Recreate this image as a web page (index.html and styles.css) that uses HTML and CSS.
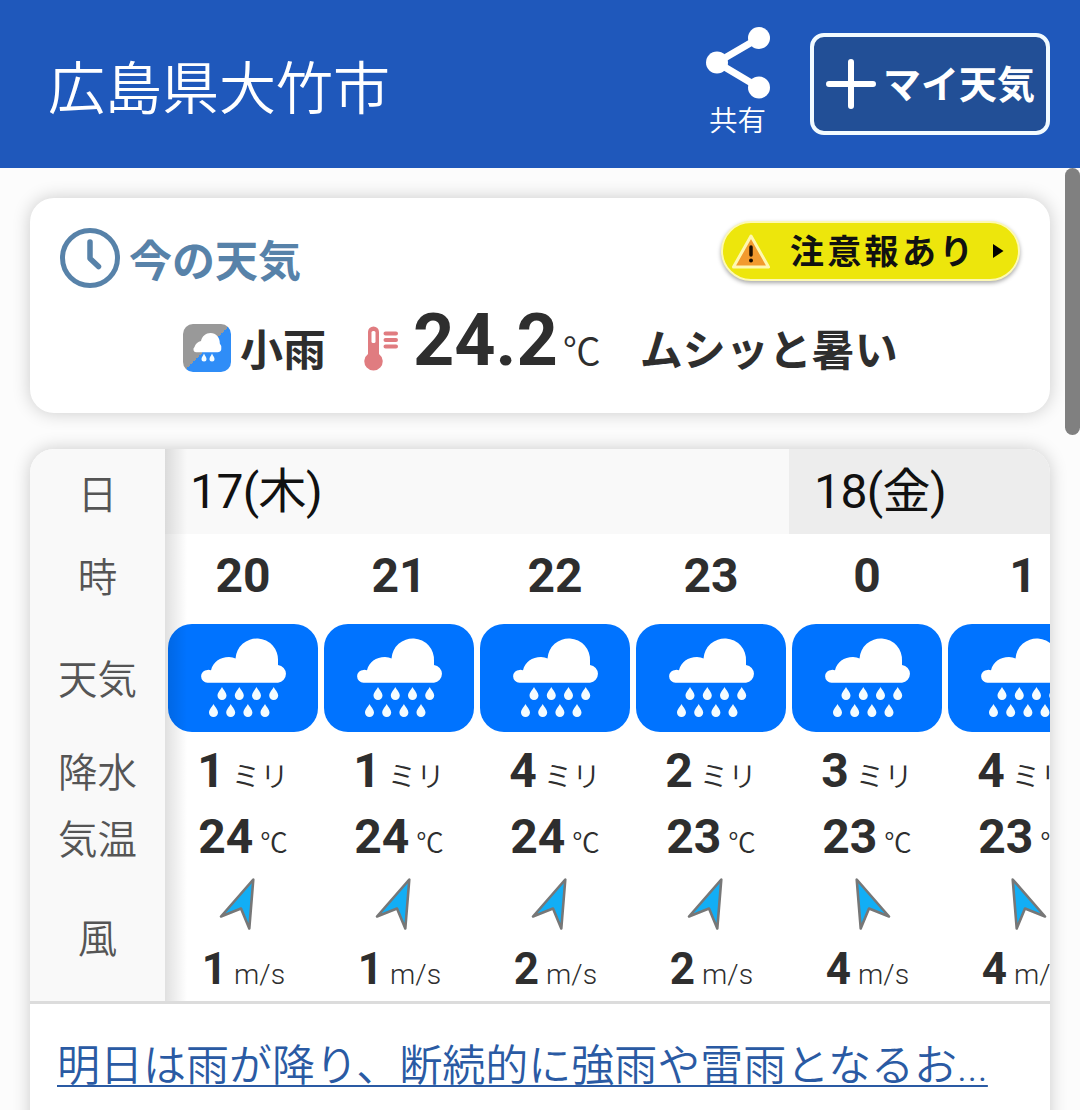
FILE: index.html
```html
<!DOCTYPE html>
<html lang="ja">
<head>
    <meta charset="UTF-8">
    <meta name="viewport" content="width=device-width, initial-scale=1.0">
    <title>広島県大竹市の天気</title>
    <link rel="stylesheet" href="styles.css">
</head>
<body>
    <!-- shared icons -->
    <svg class="defs" width="0" height="0">
        <symbol id="rain" viewBox="0 0 150 108">
            <path fill="#fff" d="M39.500 58.700A6.400 6.400 0 0 1 39.500 45.900Q41.500 45.700 43 46.300C45 38 52 33.200 61 33Q65 33 67.500 34.500A21.200 21.200 0 0 1 110 37V41A8.900 8.900 0 0 1 110 58.700Z"/>
            <g fill="#f4fcff">
                <path id="drop" d="M54 63C55.200 65.500 58.500 68.500 58.500 71.600A4.500 4.500 0 0 1 49.500 71.600C49.500 68.500 52.800 65.500 54 63Z"/>
                <use href="#drop" x="17.300"/>
                <use href="#drop" x="34.500"/>
                <use href="#drop" x="51.700"/>
                <use href="#drop" x="-8.500" y="17"/>
                <use href="#drop" x="8.700" y="17"/>
                <use href="#drop" x="25.900" y="17"/>
                <use href="#drop" x="43" y="17"/>
            </g>
        </symbol>
        <symbol id="wind" viewBox="0 0 54 56">
            <path fill="#12aef5" stroke="#777" stroke-width="2.600" stroke-linejoin="round" d="M37.300 4.500L5 41.500L25 33.500L33.300 53.500Z"/>
        </symbol>
    </svg>

    <header class="header">
        <h1 class="city">広島県大竹市</h1>
        <div class="share">
            <svg width="66" height="72" viewBox="0 0 66 72">
                <path d="M53 11L11 35.500L53 60.500" fill="none" stroke="#fff" stroke-width="7"/>
                <circle cx="53" cy="11" r="11" fill="#fff"/>
                <circle cx="11" cy="35.500" r="11" fill="#fff"/>
                <circle cx="53" cy="60.500" r="11" fill="#fff"/>
            </svg>
            <span>共有</span>
        </div>
        <button class="my-weather">
            <svg width="50" height="52" viewBox="0 0 50 52">
                <path d="M25 4V48M3 26H47" stroke="#fff" stroke-width="6" stroke-linecap="round"/>
            </svg>
            <span>マイ天気</span>
        </button>
    </header>

    <main class="main">
        <section class="card now">
            <div class="now-head">
                <svg width="60" height="60" viewBox="0 0 60 60" fill="none" stroke="#5782a9">
                    <circle cx="30" cy="30" r="27.500" stroke-width="5"/>
                    <path d="M30 14V30.500L38.500 38.500" stroke-width="5.500" stroke-linecap="round" stroke-linejoin="round"/>
                </svg>
                <h2>今の天気</h2>
                <div class="alert">
                    <svg width="40" height="37" viewBox="0 0 40 37">
                        <path d="M20 3L37.500 34H2.500Z" fill="#f29a2e" stroke="#fff7b0" stroke-width="3" stroke-linejoin="round"/>
                        <path d="M20 14V22" stroke="#1a0d00" stroke-width="3.500" stroke-linecap="round"/>
                        <circle cx="20" cy="27.500" r="2" fill="#1a0d00"/>
                    </svg>
                    <span class="alert-text">注意報あり</span>
                    <svg width="11" height="16" viewBox="0 0 11 16"><path d="M0 1L10.500 8L0 15Z" fill="#000"/></svg>
                </div>
            </div>
            <div class="now-body">
                <svg class="now-icon" width="48" height="48" viewBox="0 0 48 48">
                    <defs>
                        <linearGradient id="half" x1="0" y1="0" x2="1" y2="1">
                            <stop offset="0.500" stop-color="#999"/>
                            <stop offset="0.500" stop-color="#2f8df7"/>
                        </linearGradient>
                    </defs>
                    <rect width="48" height="48" rx="10" fill="url(#half)"/>
                    <path fill="#fff" d="M13 28.300A3 3 0 0 1 11.500 23C12.500 20 15 17.500 18 17C19 12 23 9 27.500 9C33 9 37 13.500 36.800 19.500Q38.500 21.500 38.300 24A4 4 0 0 1 35 28.300Z"/>
                    <path fill="#f4fcff" d="M21 29.500C22 32 23.500 33 23.500 35A2.500 2.500 0 0 1 18.500 35C18.500 33 20 32 21 29.500ZM29 29.500C30 32 31.500 33 31.500 35A2.500 2.500 0 0 1 26.500 35C26.500 33 28 32 29 29.500Z"/>
                </svg>
                <span class="sky">小雨</span>
                <svg class="thermo" width="34" height="46" viewBox="0 0 34 46">
                    <path fill="#e07c80" d="M4 6A5.500 5.500 0 0 1 15 6V28A9.200 9.200 0 1 1 4 28Z"/>
                    <rect x="7.500" y="5" width="4" height="12" rx="1.500" fill="#fff"/>
                    <path d="M21.500 7.500H32M21.500 14H32M21.500 20.500H32" stroke="#e07c80" stroke-width="4" stroke-linecap="round"/>
                </svg>
                <span class="temp">24.2</span>
                <span class="deg">℃</span>
                <span class="feel">ムシッと暑い</span>
            </div>
        </section>

        <section class="card forecast">
            <div class="table">
                <div class="labels">
                    <div class="row-day">日</div>
                    <div class="row-hour">時</div>
                    <div class="row-sky">天気</div>
                    <div class="row-rain">降水</div>
                    <div class="row-temp">気温</div>
                    <div class="row-wind">風</div>
                </div>
                <div class="scroll">
                    <div class="days">
                        <div class="day">17(木)</div>
                        <div class="day next">18(金)</div>
                    </div>
                    <div class="hours">
                        <div class="hour">
                            <div class="row-hour">20</div>
                            <div class="row-sky"><svg><use href="#rain"/></svg></div>
                            <div class="row-rain"><b>1</b><small>ミリ</small></div>
                            <div class="row-temp"><b>24</b><small>℃</small></div>
                            <div class="row-wind"><svg><use href="#wind"/></svg><p><b>1</b><small>m/s</small></p></div>
                        </div>
                        <div class="hour">
                            <div class="row-hour">21</div>
                            <div class="row-sky"><svg><use href="#rain"/></svg></div>
                            <div class="row-rain"><b>1</b><small>ミリ</small></div>
                            <div class="row-temp"><b>24</b><small>℃</small></div>
                            <div class="row-wind"><svg><use href="#wind"/></svg><p><b>1</b><small>m/s</small></p></div>
                        </div>
                        <div class="hour">
                            <div class="row-hour">22</div>
                            <div class="row-sky"><svg><use href="#rain"/></svg></div>
                            <div class="row-rain"><b>4</b><small>ミリ</small></div>
                            <div class="row-temp"><b>24</b><small>℃</small></div>
                            <div class="row-wind"><svg><use href="#wind"/></svg><p><b>2</b><small>m/s</small></p></div>
                        </div>
                        <div class="hour">
                            <div class="row-hour">23</div>
                            <div class="row-sky"><svg><use href="#rain"/></svg></div>
                            <div class="row-rain"><b>2</b><small>ミリ</small></div>
                            <div class="row-temp"><b>23</b><small>℃</small></div>
                            <div class="row-wind"><svg><use href="#wind"/></svg><p><b>2</b><small>m/s</small></p></div>
                        </div>
                        <div class="hour">
                            <div class="row-hour">0</div>
                            <div class="row-sky"><svg><use href="#rain"/></svg></div>
                            <div class="row-rain"><b>3</b><small>ミリ</small></div>
                            <div class="row-temp"><b>23</b><small>℃</small></div>
                            <div class="row-wind"><svg class="flip"><use href="#wind"/></svg><p><b>4</b><small>m/s</small></p></div>
                        </div>
                        <div class="hour">
                            <div class="row-hour">1</div>
                            <div class="row-sky"><svg><use href="#rain"/></svg></div>
                            <div class="row-rain"><b>4</b><small>ミリ</small></div>
                            <div class="row-temp"><b>23</b><small>℃</small></div>
                            <div class="row-wind"><svg class="flip"><use href="#wind"/></svg><p><b>4</b><small>m/s</small></p></div>
                        </div>
                    </div>
                </div>
            </div>
            <a class="news" href="#">明日は雨が降り、断続的に強雨や雷雨となるお...</a>
        </section>
    </main>
    <div class="scrollbar"></div>
</body>
</html>
```

FILE: styles.css
```css
* {
    box-sizing: border-box;
}

body {
    margin: 0;
    height: 1110px;
    overflow: hidden;
    position: relative;
    background-color: #fcfcfc;
    color: #2e2e2e;
    font-family: Roboto, "Noto Sans CJK JP", sans-serif;
}

h1, h2, p {
    margin: 0;
}

svg {
    display: block;
    flex: none;
}

.defs {
    position: absolute;
}

/* Header */
.header {
    height: 168px;
    padding: 0 30px 0 48px;
    display: flex;
    background-color: #1f58bb;
    color: #fff;
}

.city {
    flex: 1;
    padding-top: 50px;
    font-size: 57px;
    line-height: 80px;
    font-weight: 350;
}

.share {
    width: 66px;
    margin-right: 38px;
    padding-top: 27px;
    font-size: 28.5px;
    line-height: 42px;
    font-weight: 350;
}

.share span {
    display: block;
    padding-left: 3px;
    margin-top: 2px;
    white-space: nowrap;
}

.my-weather {
    width: 240px;
    height: 102px;
    margin-top: 33px;
    padding: 0 0 0 12px;
    display: flex;
    align-items: center;
    gap: 7px;
    border: 4px solid #f2fbff;
    border-radius: 14px;
    background-color: #224f96;
    color: #fff;
    font-family: inherit;
    font-size: 38px;
    font-weight: 700;
    white-space: nowrap;
}

.my-weather span {
    margin-top: -5px;
}

/* Cards */
.main {
    padding: 30px 30px 0;
}

.card {
    background-color: #fff;
    border-radius: 24px;
    box-shadow: 0 0 18px rgba(0, 0, 0, 0.2);
}

.now {
    height: 215px;
    padding: 24px 30px 0;
}

.now-head {
    height: 72px;
    display: flex;
    align-items: center;
    color: #5782a9;
}

.now-head h2 {
    margin: 7px 0 0 9px;
    font-size: 43px;
    line-height: 60px;
    font-weight: 700;
}

.alert {
    width: 299px;
    height: 60px;
    margin: -14px 0 0 auto;
    padding: 0 15px 0 8px;
    display: flex;
    align-items: center;
    border: 2px solid #fdf9b4;
    border-radius: 30px;
    background-color: #ede60c;
    box-shadow: 0 2px 4px rgba(0, 0, 0, 0.35);
    color: #111;
}

.alert-text {
    margin: -3px 16px 0 19px;
    font-size: 34px;
    letter-spacing: 3.3px;
    font-weight: 700;
    white-space: nowrap;
}

.now-body {
    height: 92px;
    padding: 2px 0 0 123px;
    display: flex;
    align-items: baseline;
    white-space: nowrap;
}

.now-icon,
.thermo {
    position: relative;
    top: 7px;
}

.sky,
.feel {
    position: relative;
    top: 1px;
    font-size: 43px;
    font-weight: 700;
}

.sky {
    margin: 0 38px 0 9px;
}

.temp {
    margin-left: 15px;
    font-size: 72px;
    line-height: 90px;
    font-weight: 700;
}

.deg {
    margin-left: 5px;
    font-size: 38px;
    font-weight: 350;
}

.feel {
    margin-left: 39px;
}

/* Hourly forecast */
.forecast {
    height: 700px;
    margin-top: 36px;
    overflow: hidden;
}

.table {
    height: 555px;
    display: flex;
    border-bottom: 3px solid #dcdcdc;
}

.labels {
    flex: none;
    width: 135px;
    padding-top: 3px;
    background-color: #f9f9f9;
    color: #555;
    font-size: 39.5px;
    font-weight: 350;
    text-align: center;
}

.row-day {
    height: 85px;
    line-height: 88px;
}

.row-hour {
    height: 90px;
    line-height: 84px;
}

.row-sky {
    height: 108px;
    line-height: 108px;
}

.row-rain {
    height: 73px;
    line-height: 78px;
}

.row-temp {
    height: 66px;
    line-height: 64px;
}

.labels .row-temp {
    line-height: 66px;
}

.row-wind {
    height: 128px;
    line-height: 131px;
}

.scroll {
    flex: 1;
    overflow: hidden;
    position: relative;
}

/* edge shadow of the fixed label column */
.scroll::before {
    content: "";
    position: absolute;
    left: 0;
    top: 0;
    width: 22px;
    height: 100%;
    background: linear-gradient(to right, rgba(0, 0, 0, 0.12), rgba(0, 0, 0, 0));
}

.days,
.hours {
    display: flex;
}

.day {
    flex: none;
    width: 624px;
    height: 85px;
    padding-left: 25px;
    background-color: #f9f9f9;
    color: #111;
    font-size: 48px;
    line-height: 85px;
    letter-spacing: -0.6px;
}

.day.next {
    background-color: #ededed;
}

.hour {
    flex: none;
    width: 156px;
    text-align: center;
}

.hour .row-hour {
    font-size: 48px;
    font-weight: 700;
}

.hour .row-sky {
    margin: 0 3px;
    border-radius: 24px;
    background-color: #0073ff;
}

.hour .row-sky svg {
    width: 150px;
    height: 108px;
}

.hour .row-rain,
.hour .row-temp,
.row-wind p {
    display: flex;
    justify-content: center;
    align-items: baseline;
    gap: 7px;
    white-space: nowrap;
}

.hour b {
    font-size: 48px;
    font-weight: 700;
}

.hour small {
    font-size: 28.5px;
    font-weight: 350;
}

.hour .row-temp small {
    font-size: 27.5px;
}

.row-wind svg {
    width: 54px;
    height: 56px;
    margin: 4px auto 0;
}

.row-wind svg.flip {
    transform: scaleX(-1);
}

.row-wind p {
    padding: 3px 0 0 1px;
    line-height: 70px;
}

.row-wind b {
    font-size: 44px;
}

.news {
    display: block;
    padding: 30px 27px 0;
    color: #2a5aa3;
    font-size: 43px;
    line-height: 64px;
    font-weight: 350;
    white-space: nowrap;
    text-decoration-thickness: 2px;
    text-underline-offset: 4px;
    text-decoration-skip-ink: none;
}

.scrollbar {
    position: absolute;
    right: 0;
    top: 168px;
    width: 15px;
    height: 267px;
    border-radius: 8px;
    background-color: #808080;
}
```
